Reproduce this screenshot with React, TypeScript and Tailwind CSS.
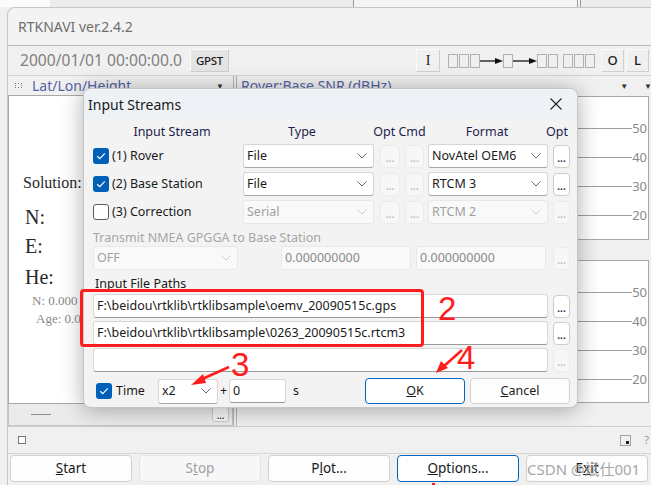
import React from "react";

function Chevron({ disabled }: { disabled?: boolean }) {
  return (
    <svg width="10" height="6" viewBox="0 0 10 6" className="shrink-0">
      <path d="M0.5 0.5l4.5 4.5 4.5-4.5" fill="none" stroke={disabled ? "#cfcfcf" : "#6a6a6a"} strokeWidth="1" />
    </svg>
  );
}

function Combo({ text, className, disabled }: { text: string; className: string; disabled?: boolean }) {
  return (
    <div
      className={`flex h-[24px] shrink-0 items-center justify-between rounded-[3px] border pl-[3px] pr-[6px] ${
        disabled ? "border-[#e8e8e8] bg-[#f9f9f9] text-[#a0a0a0]" : "border-[#d6d6d6] border-b-[#a8a8a8] bg-white text-[#1a1a1a]"
      } ${className}`}
    >
      <span className="truncate">{text}</span>
      <Chevron disabled={disabled} />
    </div>
  );
}

function Field({ text, className, disabled }: { text: string; className: string; disabled?: boolean }) {
  return (
    <div
      className={`flex h-[24px] shrink-0 items-center rounded-[3px] border pl-[3px] ${
        disabled ? "border-[#e8e8e8] bg-[#f9f9f9] text-[#8a8a8a]" : "border-[#d8d8d8] border-b-[#9a9a9a] bg-white text-[#1a1a1a]"
      } ${className}`}
    >
      <span className="truncate whitespace-nowrap">{text}</span>
    </div>
  );
}

function Dots({ className, disabled }: { className: string; disabled?: boolean }) {
  return (
    <div
      className={`flex shrink-0 items-center justify-center rounded-[4px] border text-[10px] font-bold leading-none ${
        disabled ? "border-[#ececec] bg-[#f7f7f7] text-[#bdbdbd]" : "border-[#cdcdcd] bg-white text-[#2b2b60]"
      } ${className}`}
    >
      <span className="translate-y-[2px]">...</span>
    </div>
  );
}

function Check({ checked }: { checked?: boolean }) {
  return checked ? (
    <div className="flex h-[16px] w-[16px] shrink-0 items-center justify-center rounded-[3px] bg-[#005fb8]">
      <svg width="10" height="8" viewBox="0 0 10 8">
        <path d="M1.2 4.2l2.6 2.4 5-5.2" fill="none" stroke="white" strokeWidth="1.2" />
      </svg>
    </div>
  ) : (
    <div className="h-[16px] w-[16px] shrink-0 rounded-[3px] border border-[#5c5c5c] bg-white" />
  );
}

function StreamRow({ checked, label, type, format, disabled }: { checked?: boolean; label: string; type: string; format: string; disabled?: boolean }) {
  return (
    <div className="flex h-[24px] items-center">
      <div className="flex w-[150px] shrink-0 items-center gap-[3px]">
        <Check checked={checked} />
        <span className="text-[#1a1a1a]">{label}</span>
      </div>
      <Combo text={type} className="w-[131px]" disabled={disabled} />
      <Dots className="ml-[6px] h-[23px] w-[20px]" disabled />
      <Dots className="ml-[5px] h-[23px] w-[19px]" disabled />
      <Combo text={format} className="ml-[4px] w-[120px]" disabled={disabled} />
      <Dots className="ml-[5px] h-[23px] w-[17px]" disabled={disabled} />
    </div>
  );
}

function InputStreams() {
  return (
    <div className="absolute left-[83px] top-[88px] flex h-[320px] w-[495px] flex-col overflow-hidden rounded-[8px] border border-[#c6c6c6] bg-[#f3f3f3] text-[12.5px] shadow-[0_2px_22px_rgba(0,0,0,0.32)]">
      <div className="flex h-[30px] shrink-0 items-center justify-between bg-[#eef2f7] pl-[4px] pr-[15px]">
        <span className="text-[14px] text-[#1a1a1a]">Input Streams</span>
        <svg width="12" height="12" viewBox="0 0 12 12">
          <path d="M0.5 0.5l11 11M11.5 0.5l-11 11" stroke="#222" strokeWidth="1.1" />
        </svg>
      </div>
      <div className="flex flex-col px-[9px]">
        <div className="mt-[4px] flex h-[18px] items-center whitespace-nowrap text-[#1e1e4e]">
          <span className="w-[158px] shrink-0 text-center">Input Stream</span>
          <span className="w-[102px] shrink-0 text-center">Type</span>
          <span className="w-[93px] shrink-0 text-center">Opt Cmd</span>
          <span className="w-[82px] shrink-0 text-center">Format</span>
          <span className="w-[40px] shrink-0 text-right">Opt</span>
        </div>
        <div className="mt-[3px] flex flex-col gap-[4px]">
          <StreamRow checked label="(1) Rover" type="File" format="NovAtel OEM6" />
          <StreamRow checked label="(2) Base Station" type="File" format="RTCM 3" />
          <StreamRow label="(3) Correction" type="Serial" format="RTCM 2" disabled />
        </div>
        <div className="mt-[5px] h-[17px] leading-[17px] text-[#a6a6a6]">Transmit NMEA GPGGA to Base Station</div>
        <div className="flex h-[24px] items-center">
          <Combo text="OFF" className="w-[145px]" disabled />
          <Field text="0.000000000" className="ml-[43px] w-[130px]" disabled />
          <Field text="0.000000000" className="ml-[5px] w-[130px]" disabled />
          <Dots className="ml-[7px] h-[23px] w-[17px]" disabled />
        </div>
        <div className="mt-[5px] h-[17px] pl-[2px] leading-[17px] text-[#1a1a1a]">Input File Paths</div>
        <div className="mt-[2px] flex flex-col gap-[3px]">
          <div className="flex h-[24px] items-center">
            <Field text="F:\beidou\rtklib\rtklibsample\oemv_20090515c.gps" className="w-[455px]" />
            <Dots className="ml-[5px] h-[23px] w-[17px]" />
          </div>
          <div className="flex h-[24px] items-center">
            <Field text="F:\beidou\rtklib\rtklibsample\0263_20090515c.rtcm3" className="w-[455px]" />
            <Dots className="ml-[5px] h-[23px] w-[17px]" />
          </div>
          <div className="flex h-[24px] items-center">
            <Field text="" className="w-[455px]" />
            <Dots className="ml-[5px] h-[23px] w-[17px]" disabled />
          </div>
        </div>
        <div className="mt-[6px] flex h-[26px] items-center">
          <div className="ml-[3px] flex items-center gap-[4px]">
            <Check checked />
            <span className="text-[#1a1a1a]">Time</span>
          </div>
          <Combo text="x2" className="ml-[13px] h-[25px] w-[60px]" />
          <span className="ml-[2px] text-[#1a1a1a]">+</span>
          <Field text="0" className="ml-[2px] w-[57px]" />
          <span className="ml-[7px] text-[#1a1a1a]">s</span>
          <div className="ml-[66px] flex h-[26px] w-[100px] shrink-0 items-center justify-center rounded-[4px] border-[1.5px] border-[#0067c0] bg-white text-[#1a1a1a]">
            <span><u>O</u>K</span>
          </div>
          <div className="ml-[5px] flex h-[26px] w-[100px] shrink-0 items-center justify-center rounded-[4px] border border-[#d2d2d2] bg-[#fdfdfd] text-[#1a1a1a]">
            <span><u>C</u>ancel</span>
          </div>
        </div>
      </div>
    </div>
  );
}

function Tofu({ n }: { n: number }) {
  return (
    <div className="flex gap-[1px]">
      {Array.from({ length: n }).map((_, i) => (
        <div key={i} className="h-[14px] w-[10px] border border-[#b0b0b0]" />
      ))}
    </div>
  );
}

function Arrow({ w }: { w: number }) {
  return (
    <svg width={w} height="8" viewBox={`0 0 ${w} 8`}>
      <path d={`M0 4H${w - 6}`} stroke="#111" strokeWidth="1.3" />
      <path d={`M${w - 8} 1L${w} 4L${w - 8} 7Z`} fill="#111" />
    </svg>
  );
}

function Chart({ className }: { className: string }) {
  return (
    <div className={`flex flex-col border border-[#a8a8a8] bg-white pt-[24px] ${className}`}>
      <div className="flex flex-col gap-[15px]">
        {["50", "40", "30", "20"].map((v) => (
          <div key={v} className="flex h-[14px] items-center">
            <div className="h-px flex-1 bg-[#a0a0a0]" />
            <span className="pr-[1px] text-[13px] leading-none text-[#8a8a8a]">{v}</span>
          </div>
        ))}
      </div>
    </div>
  );
}

function MainButton({ children, focused, disabled }: { children: React.ReactNode; focused?: boolean; disabled?: boolean }) {
  return (
    <div
      className={`flex h-[27px] w-[122px] shrink-0 items-center justify-center rounded-[4px] text-[13.5px] ${
        focused ? "border-[1.5px] border-[#0067c0] bg-white text-[#1a1a1a]" : disabled ? "border border-[#e4e4e4] bg-[#f7f7f7] text-[#a2a2a2]" : "border border-[#d0d0d0] bg-[#fdfdfd] text-[#1a1a1a]"
      }`}
    >
      {children}
    </div>
  );
}

export default function App() {
  return (
    <div className="relative h-[485px] w-[651px] overflow-hidden bg-[#f0f0f0] font-['Noto_Sans',sans-serif]">
      {/* window behind */}
      <div className="flex h-[7px]">
        <div className="w-[50px] bg-[#fbfbfb]" />
        <div className="w-[303px] bg-[#ececec]" />
        <div className="w-px bg-[#9a9a9a]" />
        <div className="w-[223px] bg-[#f4f4f4]" />
        <div className="w-px bg-[#9a9a9a]" />
        <div className="w-[2px] bg-[#f4f4f4]" />
        <div className="w-px bg-[#9a9a9a]" />
        <div className="flex-1 bg-[#ececec]" />
      </div>

      {/* main window */}
      <div className="ml-[7px] flex h-[478px] w-[650px] flex-col rounded-tl-[8px] border-l border-t border-[#c6c6c6] bg-[#f0f0f0]">
        <div className="flex h-[38px] shrink-0 items-center rounded-tl-[8px] border-b border-[#bdbdbd] bg-[#f3f3f3] pl-[10px] text-[14px] text-[#6e6e6e]">
          RTKNAVI ver.2.4.2
        </div>
        <div className="flex h-[29px] shrink-0 items-center">
          <span className="ml-[12px] w-[165px] shrink-0 whitespace-nowrap text-[15.6px] text-[#808080]">2000/01/01 00:00:00.0</span>
          <div className="ml-[5px] flex h-[23px] w-[39px] shrink-0 items-center justify-center border border-[#fafafa] border-b-[#cfcfcf] border-r-[#cfcfcf] bg-[#e4e4e4] text-[11.5px] font-medium tracking-[-0.3px] text-[#1a1a1a]">
            GPST
          </div>
          <div className="ml-[187px] flex h-[23px] w-[24px] shrink-0 items-center justify-center border border-[#fafafa] border-b-[#cfcfcf] border-r-[#cfcfcf] font-['Liberation_Serif',serif] text-[14px] text-[#222]">
            I
          </div>
          <div className="ml-[8px] flex shrink-0 items-center">
            <Tofu n={3} />
            <Arrow w={23} />
            <Tofu n={1} />
            <Arrow w={24} />
            <Tofu n={2} />
            <div className="w-[5px]" />
            <Tofu n={3} />
          </div>
          <div className="ml-[6px] flex h-[23px] w-[23px] shrink-0 items-center justify-center border border-[#fafafa] border-b-[#cfcfcf] border-r-[#cfcfcf] text-[13px] font-medium text-[#1a1a1a]">
            O
          </div>
          <div className="ml-[2px] flex h-[23px] w-[23px] shrink-0 items-center justify-center border border-[#fafafa] border-b-[#cfcfcf] border-r-[#cfcfcf] text-[13px] font-medium text-[#1a1a1a]">
            L
          </div>
        </div>
        <div className="flex h-[20px] shrink-0 items-center border-t border-[#d4d4d4]">
          <div className="flex w-[225px] items-center">
            <svg width="8" height="6" viewBox="0 0 8 6" className="ml-[7px]">
              <g fill="#7a7a7a">
                <rect x="0" y="0" width="1" height="1" /><rect x="3" y="0" width="1" height="1" /><rect x="6" y="0" width="1" height="1" />
                <rect x="0" y="2" width="1" height="1" /><rect x="6" y="2" width="1" height="1" />
                <rect x="0" y="4" width="1" height="1" /><rect x="3" y="4" width="1" height="1" /><rect x="6" y="4" width="1" height="1" />
              </g>
            </svg>
            <span className="ml-[9px] text-[14px] text-[#5563a6]">Lat/Lon/Height</span>
            <span className="ml-auto mr-[9px] text-[8px] text-[#333]">▼</span>
          </div>
          <div className="h-[20px] w-[4px] border-x border-[#b0b0b0]" />
          <span className="ml-[4px] text-[14px] text-[#5563a6]">Rover:Base SNR (dBHz)</span>
          <span className="ml-auto text-[8px] text-[#333]">▼</span>
          <span className="ml-[16px] mr-[5px] text-[8px] text-[#333]">▼</span>
        </div>

        <div className="flex h-[309px] shrink-0">
          <div className="flex w-[225px] flex-col border border-[#a8a8a8] bg-white pl-[14px] font-['Liberation_Serif',serif] text-[#2a2a2a]">
            <span className="mt-[77px] text-[16px] leading-[20px]">Solution:</span>
            <span className="mt-[11px] pl-[2px] text-[20px] leading-[26px]">N:</span>
            <span className="mt-[3px] pl-[2px] text-[20px] leading-[26px]">E:</span>
            <span className="mt-[5px] pl-[2px] text-[20px] leading-[26px]">He:</span>
            <span className="mt-[3px] pl-[9px] text-[13px] leading-[16px] text-[#8a8a8a]">N: 0.000 E: 0.000 U: 0.000 m</span>
            <span className="mt-[2px] pl-[13px] text-[13px] leading-[16px] text-[#8a8a8a]">Age: 0.0 s Ratio: 0.0 #Sat: 0</span>
          </div>
          <div className="h-full w-[4px] border-x border-[#b8b8b8]" />
          <div className="flex flex-1 flex-col pt-[1px] pr-[8px]">
            <Chart className="h-[144px]" />
            <div className="h-[20px]" />
            <Chart className="h-[143px]" />
          </div>
        </div>

        <div className="flex h-[22px] shrink-0 items-center">
          <div className="flex h-full w-[225px] items-center border-x border-b border-[#c4c4c4] bg-[#ebebeb]">
            <div className="ml-[22px] h-px w-[20px] bg-[#909090]" />
            <div className="ml-auto mr-[3px] flex h-[15px] w-[17px] items-center justify-center rounded-[3px] border border-[#c8c8c8] bg-[#f8f8f8] text-[9px] font-bold leading-none text-[#333]">
              <span className="translate-y-[1px]">...</span>
            </div>
          </div>
          <div className="h-full w-[4px] border-x border-[#b8b8b8]" />
        </div>

        <div className="flex h-[27px] shrink-0 items-center border-t border-[#cfcfcf]">
          <div className="ml-[10px] h-[8px] w-[8px] border border-[#777] bg-white" />
          <svg width="11" height="11" viewBox="0 0 11 11" className="ml-auto">
            <rect x="0.5" y="0.5" width="10" height="10" fill="none" stroke="#555" strokeWidth="1" strokeDasharray="1 1" />
            <rect x="6" y="6" width="3" height="3" fill="#222" />
          </svg>
          <span className="ml-[13px] mr-[8px] text-[11px] text-[#999]">?</span>
        </div>

        <div className="flex h-[29px] shrink-0 items-start gap-[7px] border-t border-[#d6d6d6] pl-[2px] pt-[1px]">
          <MainButton><span><u>S</u>tart</span></MainButton>
          <MainButton disabled><span>S<u>t</u>op</span></MainButton>
          <MainButton><span>P<u>l</u>ot...</span></MainButton>
          <MainButton focused><span><u>O</u>ptions...</span></MainButton>
          <div className="relative">
            <MainButton><span>E<u>x</u>it</span></MainButton>
            <span className="absolute left-[1px] top-[3px] whitespace-nowrap font-['Noto_Sans','Noto_Sans_CJK_SC',sans-serif] text-[15px] text-[#9a9a9a]/90">
              CSDN @斌仕001
            </span>
          </div>
        </div>
        <div className="relative h-[5px] overflow-hidden">
          <div className="absolute left-[424px] top-[1px] h-[4px] w-[3px] bg-[#e02020]" />
          <span className="absolute left-[440px] top-[1px] whitespace-nowrap text-[13px] leading-[14px] text-[#333]">F:\beidou\rtklib\rtklibsample\0263</span>
        </div>
      </div>

      <InputStreams />

      {/* annotations */}
      <div className="absolute left-[80px] top-[289px] h-[58px] w-[344px] rounded-[4px] border-[3px] border-[#ff1c1c]" />
      <span className="absolute left-[438px] top-[289px] font-['Liberation_Sans',sans-serif] text-[33px] leading-[40px] text-[#ff1c1c]">2</span>
      <span className="absolute left-[231px] top-[345px] font-['Liberation_Sans',sans-serif] text-[33px] leading-[40px] text-[#ff1c1c]">3</span>
      <span className="absolute left-[457px] top-[338px] font-['Liberation_Sans',sans-serif] text-[33px] leading-[40px] text-[#ff1c1c]">4</span>
      <svg className="pointer-events-none absolute left-0 top-0" width="651" height="485" viewBox="0 0 651 485">
        <path d="M229 367L200 380" stroke="#ff1c1c" strokeWidth="2.5" />
        <path d="M191 385L203 374L206 383Z" fill="#ff1c1c" />
        <path d="M462 350L443 367" stroke="#ff1c1c" strokeWidth="2.5" />
        <path d="M436 373L441 361L448 368Z" fill="#ff1c1c" />
      </svg>
    </div>
  );
}
